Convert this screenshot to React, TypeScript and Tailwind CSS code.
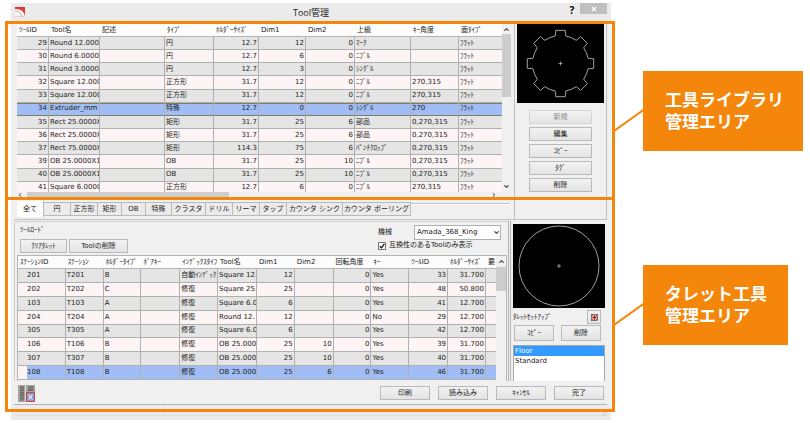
import React, { useState } from 'react';
import { ChevronDown, ChevronLeft, ChevronRight, ChevronUp } from 'lucide-react';

type Column = { label: string; width: number; right?: boolean };

const libraryColumns: Column[] = [
  { label: 'ﾂｰﾙID', width: 32, right: true },
  { label: 'Tool名', width: 51 },
  { label: '記述', width: 65 },
  { label: 'ﾀｲﾌﾟ', width: 49 },
  { label: 'ﾎﾙﾀﾞｰｻｲｽﾞ', width: 45, right: true },
  { label: 'Dim1', width: 47, right: true },
  { label: 'Dim2', width: 49, right: true },
  { label: '上級', width: 56 },
  { label: 'ｷｰ角度', width: 48 },
  { label: '面ﾀｲﾌﾟ', width: 43 },
];

const libraryRows = [
  ['29', 'Round 12.000', '', '円', '12.7', '12', '0', 'ﾏｰｸ', '', 'ﾌﾗｯﾄ'],
  ['30', 'Round 6.0000', '', '円', '12.7', '6', '0', 'ﾆﾌﾞﾙ', '', 'ﾌﾗｯﾄ'],
  ['31', 'Round 3.0000', '', '円', '12.7', '3', '0', 'ｼﾝｸﾞﾙ', '', 'ﾌﾗｯﾄ'],
  ['32', 'Square 12.000', '', '正方形', '31.7', '12', '0', 'ﾆﾌﾞﾙ', '270,315', 'ﾌﾗｯﾄ'],
  ['33', 'Square 12.000', '', '正方形', '31.7', '12', '0', 'ﾆﾌﾞﾙ', '270,315', 'ﾌﾗｯﾄ'],
  ['34', 'Extruder_mm', '', '特殊', '12.7', '0', '0', 'ｼﾝｸﾞﾙ', '270', 'ﾌﾗｯﾄ'],
  ['35', 'Rect 25.0000X', '', '矩形', '31.7', '25', '6', '部品', '0,270,315', 'ﾌﾗｯﾄ'],
  ['36', 'Rect 25.0000X', '', '矩形', '31.7', '25', '6', '部品', '0,270,315', 'ﾌﾗｯﾄ'],
  ['37', 'Rect 75.0000X', '', '矩形', '114.3', '75', '6', 'ﾊﾟﾝﾁｸﾛｯﾌﾟ', '0,270,315', 'ﾌﾗｯﾄ'],
  ['39', 'OB 25.0000X1', '', 'OB', '31.7', '25', '10', 'ﾆﾌﾞﾙ', '0,270,315', 'ﾌﾗｯﾄ'],
  ['40', 'OB 25.0000X1', '', 'OB', '31.7', '25', '10', 'ﾆﾌﾞﾙ', '0,270,315', 'ﾌﾗｯﾄ'],
  ['41', 'Square 6.0000', '', '正方形', '12.7', '6', '0', 'ﾆﾌﾞﾙ', '270,315', 'ﾌﾗｯﾄ'],
];

const turretColumns: Column[] = [
  { label: 'ｽﾃｰｼｮﾝID', width: 48 },
  { label: 'ｽﾃｰｼｮﾝ', width: 38 },
  { label: 'ﾎﾙﾀﾞｰﾀｲﾌﾟ', width: 38 },
  { label: 'ﾎﾞｱｷｰ', width: 39 },
  { label: 'ｲﾝﾃﾞｯｸｽﾀｲﾌ', width: 38 },
  { label: 'Tool名', width: 39 },
  { label: 'Dim1', width: 38, right: true },
  { label: 'Dim2', width: 39, right: true },
  { label: '回転角度', width: 38, right: true },
  { label: 'ｷｰ', width: 38 },
  { label: 'ﾂｰﾙID', width: 39, right: true },
  { label: 'ﾎﾙﾀﾞｰｻｲｽﾞ', width: 38, right: true },
  { label: '要', width: 10 },
];

const turretRows = [
  ['201', 'T201', 'B', '', '自動ｲﾝﾃﾞｯｸ', 'Square 12.', '12', '', '0', 'Yes', '33', '31.700', ''],
  ['202', 'T202', 'C', '', '修復', 'Square 25.', '25', '', '0', 'Yes', '48', '50.800', ''],
  ['103', 'T103', 'A', '', '修復', 'Square 6.0', '6', '', '0', 'Yes', '41', '12.700', ''],
  ['204', 'T204', 'A', '', '修復', 'Round 12.', '12', '', '0', 'No', '29', '12.700', ''],
  ['305', 'T305', 'A', '', '修復', 'Square 6.0', '6', '', '0', 'Yes', '42', '12.700', ''],
  ['106', 'T106', 'B', '', '修復', 'OB 25.000', '25', '10', '0', 'Yes', '39', '31.700', ''],
  ['307', 'T307', 'B', '', '修復', 'OB 25.000', '25', '10', '0', 'Yes', '40', '31.700', ''],
  ['108', 'T108', 'B', '', '修復', 'OB 25.000', '25', '6', '0', 'Yes', '46', '31.700', ''],
];

const tabs = [
  { label: '全て', width: 'w-[27px]' },
  { label: '円', width: 'w-[27px]' },
  { label: '正方形', width: 'w-[27px]' },
  { label: '矩形', width: 'w-[24px]' },
  { label: 'OB', width: 'w-[24px]' },
  { label: '特殊', width: 'w-[26px]' },
  { label: 'クラスタ', width: 'w-[34px]' },
  { label: 'ドリル', width: 'w-[27px]' },
  { label: 'リーマ', width: 'w-[27px]' },
  { label: 'タップ', width: 'w-[27px]' },
  { label: 'カウンタ シンク', width: 'w-[56px]' },
  { label: 'カウンタ ボーリング', width: 'w-[68px]' },
];

function Cols({ columns }: { columns: Column[] }) {
  const total = columns.reduce((sum, c) => sum + c.width, 0);
  return (
    <colgroup>
      {columns.map((c, i) => (
        <col key={i} style={{ width: `${(c.width / total) * 100}%` }} />
      ))}
    </colgroup>
  );
}

function HeadRow({ columns }: { columns: Column[] }) {
  return (
    <thead>
      <tr>
        {columns.map((c, i) => (
          <th key={i} scope="col" className="h-[13px] overflow-hidden border-b border-[#b4b4b4] bg-[#fcfcfc] p-0 pl-0.5 text-left font-normal whitespace-nowrap">
            {c.label}
          </th>
        ))}
      </tr>
    </thead>
  );
}

function Btn({ children, className = '', disabled = false }: { children: React.ReactNode; className?: string; disabled?: boolean }) {
  return (
    <button
      type="button"
      disabled={disabled}
      className={`flex items-center justify-center border border-[#b9b9b9] bg-linear-to-b from-[#f2f2f2] to-[#e4e4e4] whitespace-nowrap disabled:border-[#d4d4d4] disabled:text-[#8f8f8f] ${className}`}
    >
      {children}
    </button>
  );
}

// closed outline: eight teeth sitting on a ring
function gearPath(cx: number, cy: number, inner: number, outer: number) {
  const points: string[] = [];
  const at = (r: number, deg: number) => {
    const a = (deg * Math.PI) / 180;
    return `${(cx + r * Math.cos(a)).toFixed(1)} ${(cy + r * Math.sin(a)).toFixed(1)}`;
  };
  for (let i = 0; i < 8; i++) {
    const mid = i * 45 - 90;
    points.push(`${i === 0 ? 'M' : `A${inner} ${inner} 0 0 1 `}${at(inner, mid - 11)}`);
    points.push(`L${at(outer, mid - 8)} L${at(outer, mid + 8)} L${at(inner, mid + 11)}`);
  }
  points.push(`A${inner} ${inner} 0 0 1 ${at(inner, -101)}Z`);
  return points.join(' ');
}

function LibraryTable() {
  const [selected, setSelected] = useState('34');
  return (
    <div className="h-[168px] min-w-0 flex-1 overflow-hidden">
      <table className="h-[171px] w-full table-fixed border-separate border-spacing-0">
        <Cols columns={libraryColumns} />
        <HeadRow columns={libraryColumns} />
        <tbody>
          {libraryRows.map((row) => {
            const active = row[0] === selected;
            return (
              <tr key={row[0]} onClick={() => setSelected(row[0])} className={active ? 'bg-[#a0bef5]' : 'odd:bg-[#e5e5e5] even:bg-[#fdf5f5]'}>
                {row.map((cell, i) => (
                  <td
                    key={i}
                    className={`overflow-hidden border-b p-0 px-px whitespace-nowrap ${i < row.length - 1 ? 'border-r border-r-[#b0b0b0]' : ''} ${libraryColumns[i].right ? 'text-right' : ''} ${active ? 'border-b-[#857b62] shadow-[inset_0_1px_0_#857b62]' : 'border-b-[#b0b0b0]'}`}
                  >
                    {cell}
                  </td>
                ))}
              </tr>
            );
          })}
        </tbody>
      </table>
    </div>
  );
}

function TurretTable() {
  const [selected, setSelected] = useState('108');
  return (
    <div className="flex h-[126px] overflow-hidden border border-b-0 border-[#b4b4b4]">
      <div className="min-w-0 flex-1">
        <table className="h-[124px] w-full table-fixed border-separate border-spacing-0">
          <Cols columns={turretColumns} />
          <HeadRow columns={turretColumns} />
          <tbody>
            {turretRows.map((row) => {
              const active = row[0] === selected;
              return (
                <tr key={row[0]} onClick={() => setSelected(row[0])} className={active ? 'bg-[#a0bef5]' : 'odd:bg-[#e5e5e5] even:bg-[#fdf5f5]'}>
                  {row.map((cell, i) => (
                    <td
                      key={i}
                      className={`overflow-hidden border-b border-[#b0b0b0] p-0 whitespace-nowrap ${i < row.length - 1 ? 'border-r' : ''} ${turretColumns[i].right ? 'text-right' : ''} ${i === 0 ? 'pl-[9px]' : 'px-px'} ${i === 0 && active ? 'bg-linear-to-r from-[#fdf5f5] from-[9px] to-[#a0bef5] to-[9px]' : ''}`}
                    >
                      {cell}
                    </td>
                  ))}
                </tr>
              );
            })}
          </tbody>
        </table>
      </div>
      <div className="flex w-[10px] flex-col items-center bg-[#f0f0f0]">
        <ChevronUp size={7} strokeWidth={4} className="my-[2px] text-[#444]" />
        <div className="h-[24px] w-full bg-[#cdcdcd]" />
      </div>
    </div>
  );
}

function TurretToolbar() {
  const [onlyCompatible, setOnlyCompatible] = useState(true);
  return (
    <div className="flex items-start justify-between pb-0.5">
      <div className="pt-1 pl-[3px]">
        <p>ﾂｰﾙﾛｰﾄﾞ</p>
        <div className="mt-1 flex gap-0.5">
          <Btn className="h-[14px] w-[47px]">ｸﾘｱﾀﾚｯﾄ</Btn>
          <Btn className="h-[14px] w-[59px]">Toolの削除</Btn>
        </div>
      </div>
      <div className="w-[129px] pt-[3px]">
        <div className="flex items-center">
          <label htmlFor="machine" className="w-[36px]">機械</label>
          <div className="relative">
            <select id="machine" className="block h-[15px] w-[87px] appearance-none border border-[#b0b0b0] bg-white p-0 pl-0.5">
              <option>Amada_368_King</option>
            </select>
            <ChevronDown size={7} strokeWidth={4} className="pointer-events-none absolute top-1 right-px text-[#444]" />
          </div>
        </div>
        <label className="mt-px flex items-center gap-[3px] whitespace-nowrap">
          <span className="grid">
            <input
              type="checkbox"
              checked={onlyCompatible}
              onChange={(e) => setOnlyCompatible(e.target.checked)}
              className="size-2 appearance-none border border-[#777] bg-white [grid-area:1/1]"
            />
            {onlyCompatible && (
              <svg viewBox="0 0 8 8" className="pointer-events-none size-2 [grid-area:1/1]">
                <path d="M1.8 4.2 3.4 5.8 6.4 2" fill="none" stroke="#111" strokeWidth="1.3" />
              </svg>
            )}
          </span>
          互換性のあるToolのみ表示
        </label>
      </div>
    </div>
  );
}

function SetupPanel() {
  const [setup, setSetup] = useState('Floor');
  return (
    <div className="flex w-[97px] flex-col border-l border-[#b4b4b4] pt-[3px] pr-0.5 pl-0.5">
      <svg viewBox="0 0 92 84" className="h-[84px] w-full bg-black">
        <circle cx="46" cy="42" r="40" fill="none" stroke="#c8c8c8" strokeWidth="0.8" />
        <path d="M44 42h4M46 40v4" stroke="#c8c8c8" strokeWidth="0.7" />
      </svg>
      <div className="mt-0.5 flex items-center justify-between pr-1">
        <span>ﾀﾚｯﾄｾｯﾄｱｯﾌﾟ</span>
        <Btn className="size-[14px]">
          <svg viewBox="0 0 8 8" aria-label="レイアウト" className="size-[7px]">
            <rect x="0.5" y="0.5" width="7" height="7" fill="#f3e3e3" stroke="#5a3a3a" strokeWidth="0.8" />
            <path d="M1.500 4h5M4 1.500v5" stroke="#c81818" strokeWidth="1.800" />
            <path d="M1 1l1.500 1.500M7 1 5.500 2.500M1 7l1.500-1.500M7 7 5.500 5.500" stroke="#444" strokeWidth="0.8" />
          </svg>
        </Btn>
      </div>
      <div className="mt-px flex justify-between pr-1 pl-px">
        <Btn className="h-4 w-[40px]">ｺﾋﾟｰ</Btn>
        <Btn className="h-4 w-[40px]">削除</Btn>
      </div>
      <ul role="listbox" aria-label="ﾀﾚｯﾄｾｯﾄｱｯﾌﾟ" className="mt-1 flex-1 border border-b-0 border-[#a8a8a8] bg-white">
        {['Floor', 'Standard'].map((name) => (
          <li
            key={name}
            role="option"
            aria-selected={name === setup}
            onClick={() => setSetup(name)}
            className={`h-[10px] pl-px leading-[10px] ${name === setup ? 'bg-[#3399ff] text-white' : ''}`}
          >
            {name}
          </li>
        ))}
      </ul>
    </div>
  );
}

function Callout({ lines, className }: { lines: [string, string]; className: string }) {
  return (
    <div className="flex">
      <svg viewBox="0 0 28 80" className="h-[80px] w-[28px] shrink-0">
        <path d="M-1 60 29 38.500" stroke="#f4860c" strokeWidth="2" />
      </svg>
      <p className={`h-[80px] bg-[#f4860c] pt-[17px] pl-[22px] text-[17px] leading-[22px] font-bold whitespace-nowrap text-white ${className}`}>
        {lines[0]}
        <br />
        {lines[1]}
      </p>
    </div>
  );
}

export default function App() {
  const [tab, setTab] = useState('全て');

  return (
    <div className="flex min-h-screen items-start bg-white font-['DejaVu_Sans','Noto_Sans_CJK_JP',sans-serif] text-[7px] leading-[9px] text-[#222]">
      <main className="mt-[3px] ml-[11px] min-w-0 flex-1 bg-[#ebebeb]">
        {/* Title bar */}
        <header className="grid h-[21px] grid-cols-[1fr_auto_1fr] items-start">
          <svg viewBox="0 0 10 10" className="mt-1 ml-1 size-[10px]">
            <rect width="10" height="10" fill="#faf6f6" />
            <path d="M0 0h10v10Q9.500 4.500 5 2.800 3 2 0 2Z" fill="#e03a34" />
            <path d="M0 3.500Q4 4 5 6.500T9 10" fill="none" stroke="#b5a5a5" strokeWidth="0.8" />
            <path d="M0 9.600h9" stroke="#e9a9a6" strokeWidth="0.6" />
          </svg>
          <h1 className="pt-[3px] font-['Open_Sans','Noto_Sans_CJK_JP',sans-serif] text-[9px] leading-[13px]">Tool管理</h1>
          <div className="flex justify-end gap-1 pr-1">
            <button type="button" aria-label="ヘルプ" className="w-2 pt-0.5 font-['Open_Sans',sans-serif] text-[10px] leading-[10px] font-bold text-black">?</button>
            <button type="button" aria-label="閉じる" className="grid h-[11px] w-[27px] place-items-center bg-[#bfbfbf]">
              <svg viewBox="0 0 6 6" className="size-[6px]">
                <path d="M1 1 5 5M5 1 1 5" stroke="#fff" strokeWidth="1.1" />
              </svg>
            </button>
          </div>
        </header>

        {/* Tool library */}
        <section className="relative flex h-[173px] bg-[#f0f0f0]">
          <div className="flex min-w-0 flex-1 flex-col pl-[6px]">
            <div className="flex">
              <LibraryTable />
              <div className="flex w-[9px] flex-col items-center">
                <ChevronUp size={7} strokeWidth={4} className="mt-[2px] mb-px text-[#444]" />
                <div className="h-[63px] w-full bg-[#cdcdcd]" />
                <ChevronDown size={7} strokeWidth={4} className="mt-auto mb-[2px] text-[#444]" />
              </div>
            </div>
            <div className="flex h-[5px] items-center pr-[14px]">
              <ChevronLeft size={6} strokeWidth={4} className="mr-1 text-[#444]" />
              <div className="h-full w-[42%] bg-[#cdcdcd]" />
              <ChevronRight size={6} strokeWidth={4} className="ml-auto text-[#444]" />
            </div>
          </div>
          <div className="mr-1 ml-[3px] w-[93px] border-x border-[#c0c0c0] px-0.5">
            <svg viewBox="0 0 87 79" className="h-[79px] w-full bg-black">
              <path d={gearPath(43.5, 39.5, 28, 33.5)} fill="none" stroke="#c8c8c8" strokeWidth="0.8" />
              <path d="M41.5 39.5h4M43.5 37.5v4" stroke="#c8c8c8" strokeWidth="0.7" />
            </svg>
            <div className="mt-[7px] flex flex-col gap-[3px] px-3">
              <Btn className="h-[14px]" disabled>新規</Btn>
              <Btn className="h-[14px]">編集</Btn>
              <Btn className="h-[14px]">ｺﾋﾟｰ</Btn>
              <Btn className="h-[14px]">ﾀｸﾞ</Btn>
              <Btn className="h-[14px]">削除</Btn>
            </div>
          </div>
          <div className="pointer-events-none absolute -inset-y-[3px] -right-1 -left-1.5 border-3 border-[#f4860c]" />
        </section>

        {/* Turret tooling */}
        <section className="relative bg-[#f0f0f0]">
          <div className="mr-1 ml-[3px] flex border-b border-[#c0c0c0]">
            <div role="tablist" className="flex h-[22px] min-w-0 flex-1 items-start pt-1 pl-[3px]">
              {tabs.map((t) => (
                <button
                  key={t.label}
                  type="button"
                  role="tab"
                  aria-selected={t.label === tab}
                  onClick={() => setTab(t.label)}
                  className={`shrink-0 border-r border-[#b9b9b9] text-center whitespace-nowrap ${t.width} ${t.label === tab ? 'h-4 bg-white' : 'mt-px h-[14px] border-y bg-[#ebebeb]'}`}
                >
                  {t.label}
                </button>
              ))}
              <div className="mt-0.5 mr-1 h-0.5 flex-1 border-t border-[#c0c0c0] bg-white" />
            </div>
            <div className="w-[93px] border-x border-[#c0c0c0]" />
          </div>

          <div className="mt-px mr-1 ml-[3px] flex">
            <div className="min-w-0 flex-1 border-t border-l border-[#d0d0d0] pr-px pl-0.5">
              <TurretToolbar />
              <TurretTable />
            </div>
            <div className="w-0.5 border-l border-[#b4b4b4]" />
            <SetupPanel />
          </div>

          <div className="mr-1 ml-[3px] flex items-start border-b border-[#b4b4b4] pt-1 pr-[3px] pb-0.5 pl-1">
            <svg viewBox="0 0 17 17" className="size-[17px]">
              <rect width="17" height="17" fill="#a5a39c" />
              <rect x="2" y="1.500" width="4" height="14" fill="#6c6c68" />
              <rect x="10" y="1.500" width="5.500" height="4.500" fill="#6c6c68" />
              <path d="M2 4h4M2 6.500h4M2 9h4M2 11.500h4M2 14h4M10 3.500h5.500" stroke="#9b9b96" strokeWidth="0.7" />
              <path d="M7.500 0v17" stroke="#dcdad4" />
              <rect x="8.500" y="7.500" width="8" height="9" fill="#7f9ad8" stroke="#d8403c" />
              <path d="M10.500 9.500l4 5M14.500 9.500l-4 5" stroke="#f2f5fd" strokeWidth="1.200" />
            </svg>
            <div className="mt-px ml-auto flex gap-2">
              <Btn className="h-[14px] w-[50px]">印刷</Btn>
              <Btn className="h-[14px] w-[50px]">読み込み</Btn>
              <Btn className="h-[14px] w-[50px]">ｷｬﾝｾﾙ</Btn>
              <Btn className="h-[14px] w-[50px]">完了</Btn>
            </div>
          </div>
          <div className="pointer-events-none absolute top-0 -right-1 -bottom-[7px] -left-1.5 border-3 border-[#f4860c]" />
        </section>

        {/* Status bar */}
        <footer className="h-[15px] pr-1 pl-[3px]">
          <div className="flex h-[11px] items-end justify-between border-b border-[#dedede]">
            <div className="h-full w-[150px] border-r border-[#dedede]" />
            <svg viewBox="0 0 5 5" className="size-[5px]">
              <path d="M0 4.500h1M2 4.500h1M4 4.500h1M2 2.500h1M4 2.500h1M4 .5h1" stroke="#bdbdbd" />
            </svg>
          </div>
        </footer>
      </main>

      <aside className="ml-1 flex w-[195px] shrink-0 flex-col gap-[114px] pt-[71px] font-['Noto_Sans_CJK_JP',sans-serif]">
        <Callout lines={['工具ライブラリ', '管理エリア']} className="w-[160px]" />
        <Callout lines={['タレット工具', '管理エリア']} className="w-[145px]" />
      </aside>
    </div>
  );
}
